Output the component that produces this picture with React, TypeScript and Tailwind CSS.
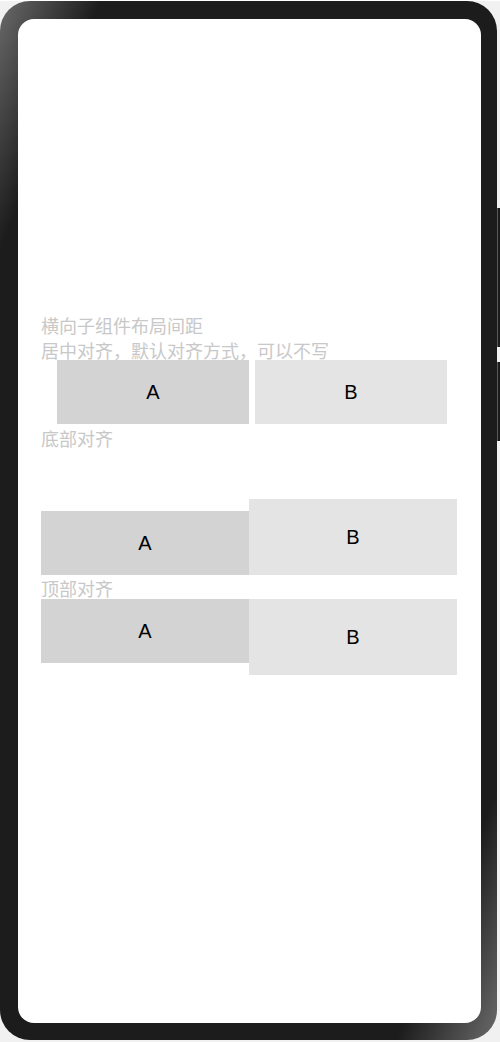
const cjk = "font-['Noto_Sans_CJK_SC','Noto_Sans',sans-serif]";

function Box({ label, tone, h, w }: { label: string; tone: "a" | "b"; h: string; w: string }) {
  return (
    <div
      className={`flex items-center justify-center ${w} ${h} ${tone === "a" ? "bg-[#d3d3d3]" : "bg-[#e4e4e4]"} text-[20px] text-black font-['Liberation_Sans',Arial,sans-serif]`}
    >
      {label}
    </div>
  );
}

export default function App() {
  return (
    <div className="relative w-[500px] h-[1042px] bg-[#f1f1f1]">
      {/* Phone frame */}
      <div className="relative mt-px w-[497px] h-[1039px] rounded-[30px] bg-[linear-gradient(112deg,#6a6a6a_0%,#1c1c1c_11%,#1c1c1c_89%,#6a6a6a_100%)] p-[18px]">
        {/* Side buttons */}
        <div className="absolute left-[497px] top-[207px] w-[3px] h-[139px] border-l border-[#5a5a5a] bg-[#1c1c1c]" />
        <div className="absolute left-[497px] top-[361px] w-[3px] h-[79px] border-l border-[#5a5a5a] bg-[#1c1c1c]" />

        {/* Screen */}
        <div className="w-[463px] h-[1004px] rounded-[16px] bg-white pt-[294px] pl-[23px]">
          <div className={`w-[416px] text-[18px] text-[#c8c8c8] ${cjk}`}>
            <p className="h-[25px] leading-[25px]">横向子组件布局间距</p>
            <p className="h-[22px] leading-[25px]">居中对齐，默认对齐方式，可以不写</p>

            <div className="flex gap-[6px] pl-[16px]">
              <Box label="A" tone="a" w="w-[192px]" h="h-[64px]" />
              <Box label="B" tone="b" w="w-[192px]" h="h-[64px]" />
            </div>

            <p className="mt-[2px] h-[25px] leading-[25px]">底部对齐</p>
            <div className="flex items-end h-[124px]">
              <Box label="A" tone="a" w="w-[208px]" h="h-[64px]" />
              <Box label="B" tone="b" w="w-[208px]" h="h-[76px]" />
            </div>

            <p className="mt-px h-[23px] leading-[25px]">顶部对齐</p>
            <div className="flex items-start">
              <Box label="A" tone="a" w="w-[208px]" h="h-[64px]" />
              <Box label="B" tone="b" w="w-[208px]" h="h-[76px]" />
            </div>
          </div>
        </div>
      </div>
    </div>
  );
}
